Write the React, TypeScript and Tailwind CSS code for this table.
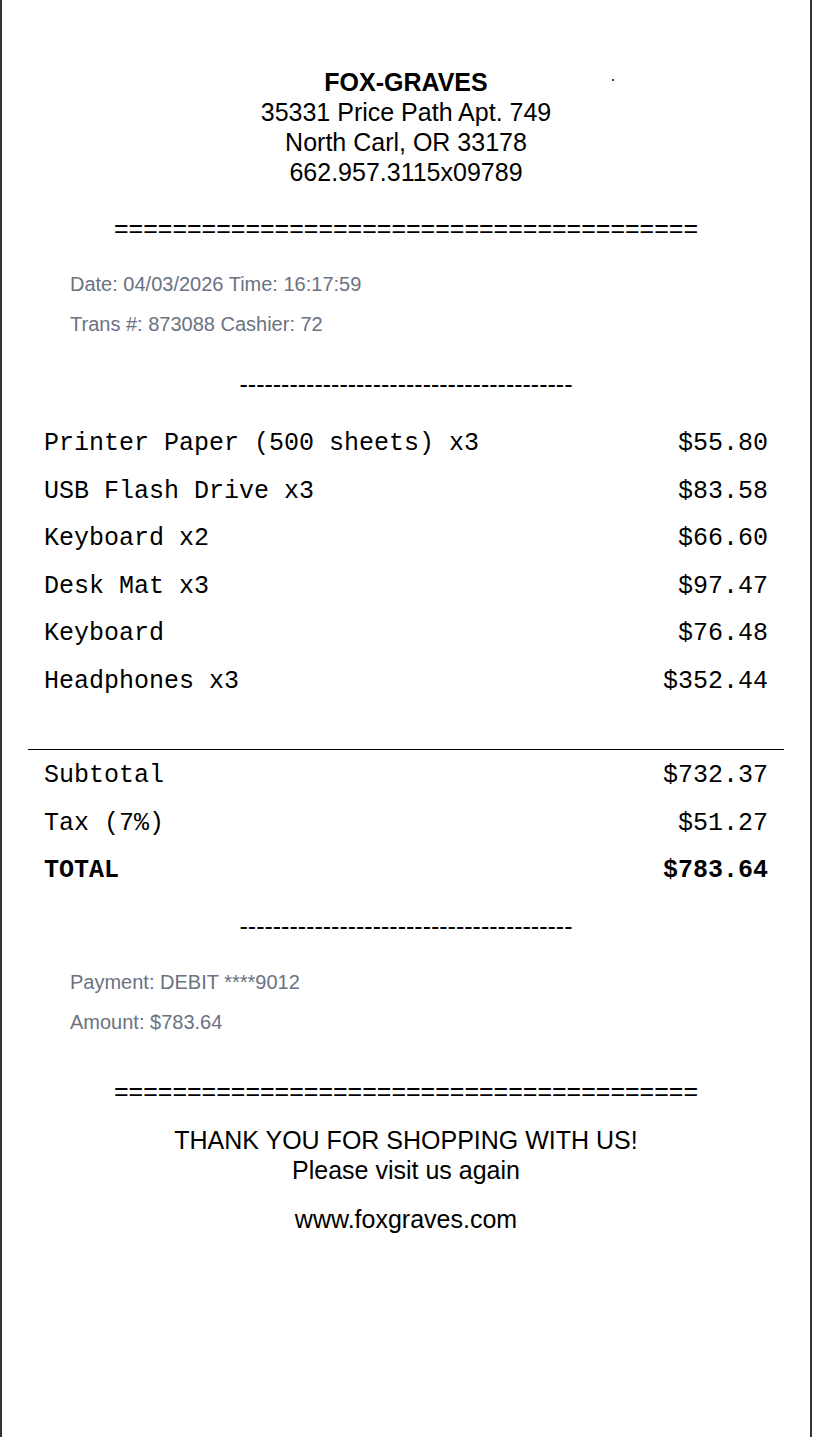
const items = [
  { name: 'Printer Paper (500 sheets) x3', price: '$55.80' },
  { name: 'USB Flash Drive x3', price: '$83.58' },
  { name: 'Keyboard x2', price: '$66.60' },
  { name: 'Desk Mat x3', price: '$97.47' },
  { name: 'Keyboard', price: '$76.48' },
  { name: 'Headphones x3', price: '$352.44' },
]

const sans = "font-['Liberation_Sans',Arial,sans-serif]"
const mono = "font-['Courier_New','Liberation_Mono',monospace]"

function Row({ label, value, bold }: { label: string; value: string; bold?: boolean }) {
  return (
    <div
      className={`flex h-[47.5px] items-center justify-between text-[25px] leading-[47.5px] text-black ${
        bold ? 'font-bold' : ''
      }`}
    >
      <span className="whitespace-pre">{label}</span>
      <span>{value}</span>
    </div>
  )
}

export default function App() {
  return (
    <div
      className={`relative min-h-screen w-[812px] border-x-2 border-[#333] bg-white px-[26px] pt-[67px] ${sans}`}
    >
      {/* speck on the paper */}
      <span className="absolute left-[610px] top-[79px] h-[2px] w-[2px] bg-gray-700" />

      {/* Store header */}
      <div className="text-center text-[25px] leading-[30px] text-black">
        <div className="font-bold">FOX-GRAVES</div>
        <div>35331 Price Path Apt. 749</div>
        <div>North Carl, OR 33178</div>
        <div>662.957.3115x09789</div>
      </div>

      <div className="mt-[26px] text-center text-[25px] leading-[30px] text-black">
        {'='.repeat(40)}
      </div>

      <div className="mt-[21px] px-[42px] text-[20px] leading-[40px] text-gray-500">
        <div>Date: 04/03/2026 Time: 16:17:59</div>
        <div>Trans #: 873088 Cashier: 72</div>
      </div>

      <div className="mt-[25px] text-center text-[25px] leading-[30px] text-black">
        {'-'.repeat(40)}
      </div>

      {/* Items */}
      <div className={`mt-[21px] border-b border-black px-4 pb-[44px] ${mono}`}>
        {items.map((it, i) => (
          <Row key={i} label={it.name} value={it.price} />
        ))}
      </div>

      {/* Totals */}
      <div className={`mt-[2px] px-4 ${mono}`}>
        <Row label="Subtotal" value="$732.37" />
        <Row label="Tax (7%)" value="$51.27" />
        <Row label="TOTAL" value="$783.64" bold />
      </div>

      <div className="mt-[16px] text-center text-[25px] leading-[30px] text-black">
        {'-'.repeat(40)}
      </div>

      <div className="mt-[21px] px-[42px] text-[20px] leading-[40px] text-gray-500">
        <div>Payment: DEBIT ****9012</div>
        <div>Amount: $783.64</div>
      </div>

      <div className="mt-[34px] text-center text-[25px] leading-[30px] text-black">
        {'='.repeat(40)}
      </div>

      {/* Footer */}
      <div className="mt-[19px] text-center text-[25px] leading-[30px] text-black">
        <div>THANK YOU FOR SHOPPING WITH US!</div>
        <div>Please visit us again</div>
        <div className="mt-[19px]">www.foxgraves.com</div>
      </div>
    </div>
  )
}
